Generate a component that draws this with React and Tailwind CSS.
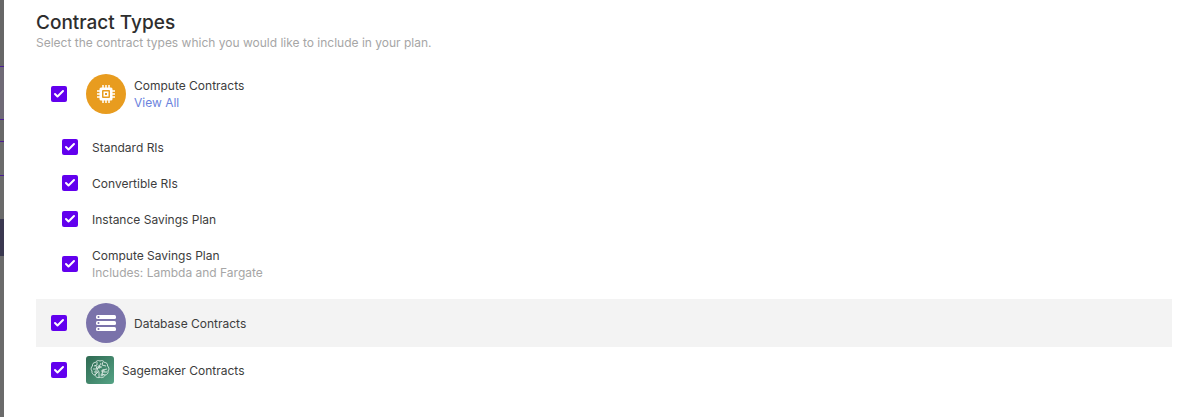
import React from 'react';
import { Check } from 'lucide-react';

const subTypes = ['Standard RIs', 'Convertible RIs', 'Instance Savings Plan'];

const stripBands = [
    'h-[66px] bg-[#676767]',
    'h-[54px] bg-[#6f6b76] border-t border-b border-[#4c1d95]',
    'h-[21px] bg-[#686868]',
    'h-[35px] bg-[#6b6b6b] border-t border-b border-[#4c1d95]',
    'h-[43px] bg-[#6a6a6a]',
    'h-[37px] bg-[#3a3850]',
    'h-[161px] bg-[#6b6b6b]',
];

function Box() {
    return (
        <div className="w-4 h-4 shrink-0 rounded-[2px] bg-[#6200ee] flex items-center justify-center">
            <Check size={12} strokeWidth={4} className="text-white" />
        </div>
    );
}

function ChipIcon() {
    return (
        <svg width="18" height="18" viewBox="0 0 18 18" fill="none">
            <path d="M6 0v18M9 0v18M12 0v18M0 6h18M0 9h18M0 12h18" stroke="white" strokeWidth="1.500" />
            <rect x="2.500" y="2.500" width="13" height="13" rx="1.500" fill="white" />
            <rect x="5" y="5" width="8" height="8" rx="1" fill="#e89c1f" />
            <rect x="6.500" y="6.500" width="5" height="5" fill="white" />
            <rect x="8" y="8" width="2" height="2" fill="#e89c1f" />
        </svg>
    );
}

function ServerIcon() {
    return (
        <svg width="20" height="16" viewBox="0 0 20 16" fill="white">
            <rect x="0" y="0" width="20" height="4" rx="1.500" />
            <rect x="0" y="6" width="20" height="4" rx="1.500" />
            <rect x="0" y="12" width="20" height="4" rx="1.500" />
            <circle cx="2.500" cy="2" r="1" fill="#7a72aa" />
            <circle cx="2.500" cy="8" r="1" fill="#7a72aa" />
            <circle cx="2.500" cy="14" r="1" fill="#7a72aa" />
        </svg>
    );
}

function BrainIcon() {
    return (
        <svg width="22" height="22" viewBox="0 0 22 22" fill="none" stroke="#dcebe4" strokeWidth="0.900">
            <path d="M11 2c2-1 4 0 4.500 1.500 2-.2 3.500 1.500 3 3.500 1.500 1 2 3.500.5 5 .5 2-1 4-3 4-.5 2-3 3.500-5 2-2 1.500-4.500 0-5-2-2 0-3.500-2-3-4-1.500-1.500-1-4 .5-5-.5-2 1-3.700 3-3.500C7 2 9 1 11 2z" />
            <path d="M8 3v3l-3 1M14 3l-1 3 4 1M4 10h4l2 3v6M18 10l-4 1-1 4 3 1M6 16l3-3M13 8h-3l-2 2M12 4l-2 4M15 13h3M7 7l1 3" />
            <circle cx="10" cy="8" r="1.200" />
            <circle cx="14" cy="12" r="1.200" />
            <circle cx="7" cy="13" r="1.200" />
            <circle cx="13" cy="16" r="1" />
        </svg>
    );
}

export default function App() {
    return (
        <div className="h-[417px] w-full flex bg-white overflow-hidden font-['Inter',sans-serif] text-[#3d3d3d]">
            <div className="w-1 shrink-0 flex flex-col">
                {stripBands.map((band, i) => (
                    <div key={i} className={band} />
                ))}
            </div>

            <div className="flex-1 pl-8 pr-[31px] pt-[10px]">
                <h1 className="text-[19px] leading-[25px] font-medium text-[#2e2e2e]">Contract Types</h1>
                <p className="text-xs leading-4 text-[#a6a6a6]">
                    Select the contract types which you would like to include in your plan.
                </p>

                {/* Compute */}
                <div className="flex items-center pl-[15px] mt-[23px] h-10">
                    <Box />
                    <div className="ml-[19px] w-10 h-10 rounded-full bg-[#e89c1f] flex items-center justify-center">
                        <ChipIcon />
                    </div>
                    <div className="ml-2 text-xs leading-[17px]">
                        <div>Compute Contracts</div>
                        <div className="text-[#6b83dd]">View All</div>
                    </div>
                </div>

                {/* Sub types */}
                <div className="mt-[15px] pl-[26px] text-xs">
                    {subTypes.map((label) => (
                        <div key={label} className="flex items-center h-9">
                            <Box />
                            <span className="ml-[14px] pt-[2px]">{label}</span>
                        </div>
                    ))}
                    <div className="flex items-center h-[54px]">
                        <Box />
                        <div className="ml-[14px] leading-[17px]">
                            <div>Compute Savings Plan</div>
                            <div className="text-[#a6a6a6]">Includes: Lambda and Fargate</div>
                        </div>
                    </div>
                </div>

                {/* Database */}
                <div className="mt-2 h-12 bg-[#f3f3f3] flex items-center pl-[15px]">
                    <Box />
                    <div className="ml-[19px] w-10 h-10 rounded-full bg-[#7a72aa] flex items-center justify-center">
                        <ServerIcon />
                    </div>
                    <span className="ml-2 pt-[2px] text-xs">Database Contracts</span>
                </div>

                {/* Sagemaker */}
                <div className="mt-[9px] h-7 flex items-center pl-[15px]">
                    <Box />
                    <div className="ml-[19px] w-7 h-7 rounded-[3px] bg-gradient-to-br from-[#2f6a52] to-[#55a385] flex items-center justify-center">
                        <BrainIcon />
                    </div>
                    <span className="ml-2 pt-[2px] text-xs">Sagemaker Contracts</span>
                </div>
            </div>
        </div>
    );
}
